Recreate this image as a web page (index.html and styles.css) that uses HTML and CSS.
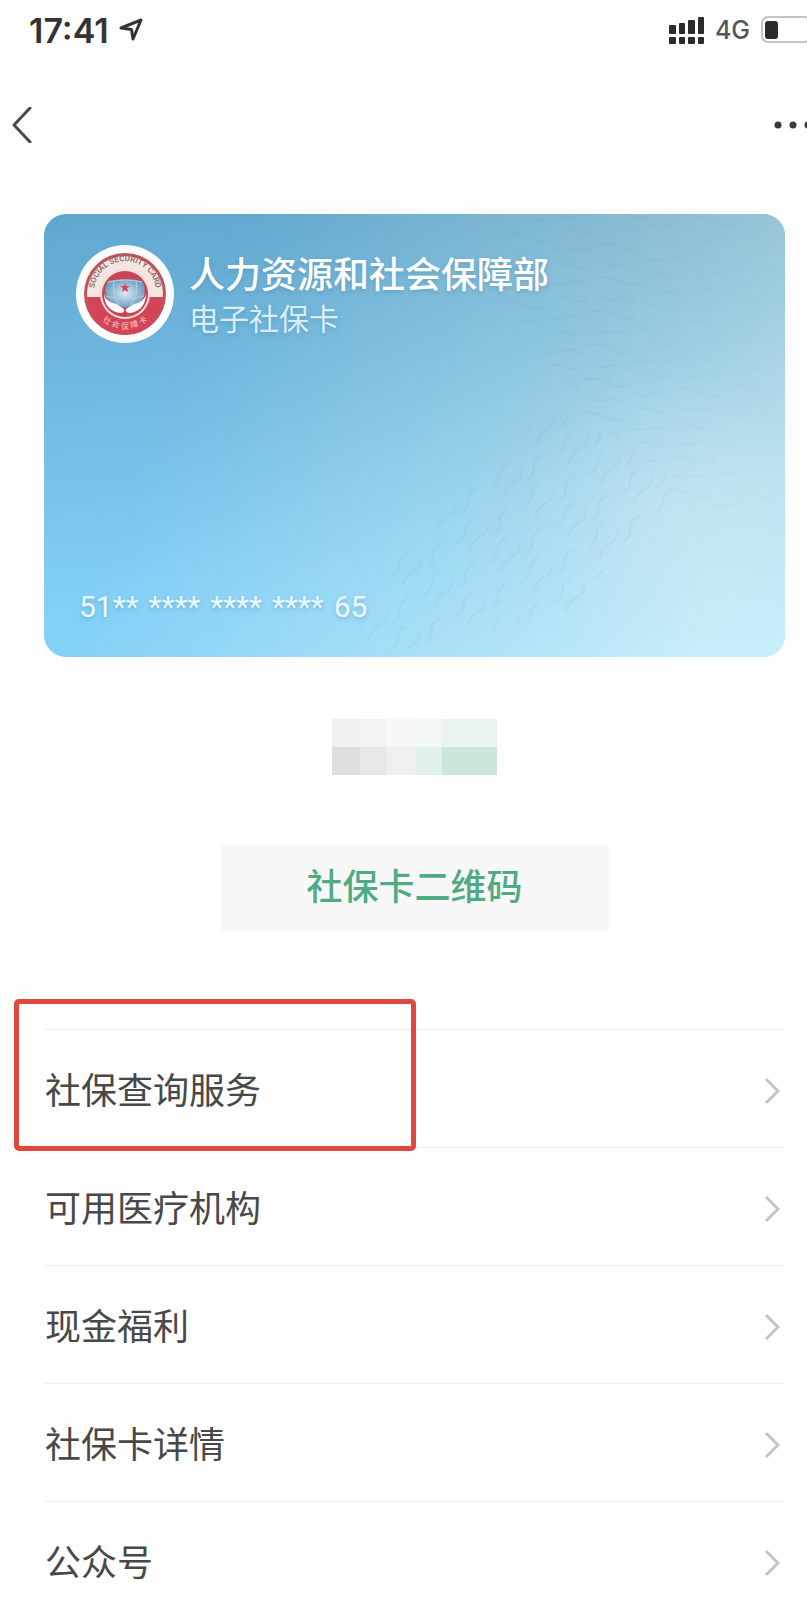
FILE: index.html
```html
<!DOCTYPE html>
<html lang="zh-CN">

<head>
    <meta charset="utf-8">
    <meta name="viewport" content="width=device-width, initial-scale=1">
    <title>电子社保卡</title>
    <link rel="stylesheet" href="styles.css">
</head>

<body>
    <!-- 状态栏 -->
    <div class="status">
        <span class="time">17:41</span>
        <svg class="locate" width="24" height="24" viewBox="0 0 24 24">
            <path d="M2 10L22 2L14 21L12.500 11.500Z" />
        </svg>
        <svg class="signal" width="36" height="28" viewBox="0 0 36 28">
            <rect x="0" y="9" width="7" height="9" rx="1" />
            <rect x="10" y="7" width="6" height="11" rx="1" />
            <rect x="19" y="4" width="7" height="14" rx="1" />
            <rect x="29" y="1" width="6" height="17" rx="1" />
            <rect x="0" y="21" width="7" height="7" rx="1" />
            <rect x="10" y="21" width="6" height="7" rx="1" />
            <rect x="19" y="21" width="7" height="7" rx="1" />
            <rect x="29" y="21" width="6" height="7" rx="1" />
        </svg>
        <span class="net">4G</span>
        <svg class="battery" width="46" height="28" viewBox="0 0 46 28">
            <rect class="shell" x="1" y="1" width="49" height="25" rx="6" />
            <rect x="4" y="5" width="13" height="18" rx="3" />
        </svg>
    </div>

    <!-- 导航 -->
    <div class="nav">
        <button type="button" class="icon_btn" aria-label="返回">
            <svg class="back" width="20" height="36" viewBox="0 0 20 36">
                <path d="M18 1L2 18L18 35" />
            </svg>
        </button>
        <button type="button" class="icon_btn" aria-label="更多">
            <svg width="34" height="10" viewBox="0 0 34 10">
                <circle cx="5" cy="5" r="3.500" />
                <circle cx="20" cy="5" r="3.500" />
                <circle cx="35" cy="5" r="3.500" />
            </svg>
        </button>
    </div>

    <div class="main">
        <div class="card">
            <!-- 水波纹 -->
            <svg class="wave" viewBox="0 0 740 443" preserveAspectRatio="none">
                <defs>
                    <pattern id="ripple" width="92" height="34" patternUnits="userSpaceOnUse" patternTransform="rotate(6)">
                        <path d="M2 6q12 -4 24 1t22 0M50 15q10 4 20 -1t20 1M8 24q10 4 18 0t18 2M60 30q8 -3 14 0t14 -1" />
                    </pattern>
                    <pattern id="ripple2" width="64" height="38" patternUnits="userSpaceOnUse" patternTransform="rotate(-58)">
                        <path d="M2 7q10 -4 18 1t16 0M30 18q8 4 14 -1t16 1M4 30q8 4 16 0t14 1" />
                    </pattern>
                    <linearGradient id="fade" x1="0" y1="0" x2="1" y2="0">
                        <stop offset="0" stop-color="#000" />
                        <stop offset="0.400" stop-color="#fff" />
                        <stop offset="1" stop-color="#222" />
                    </linearGradient>
                    <mask id="mask">
                        <rect x="380" width="360" height="443" fill="url(#fade)" />
                    </mask>
                </defs>
                <path fill="url(#ripple)" mask="url(#mask)" d="M400 0H740V300L640 290L540 200Z" />
                <path fill="url(#ripple2)" d="M510 190L640 270L520 400L330 443L300 400Z" />
            </svg>
            <div class="card_head">
                <svg class="logo" width="98" height="98" viewBox="0 0 98 98">
                    <defs>
                        <path id="arcTop" d="M19 55A31 31 0 1 1 79 55" />
                        <path id="arcBottom" d="M14 56A36 36 0 0 0 84 56" />
                        <radialGradient id="globe">
                            <stop offset="0" stop-color="#dcecf5" />
                            <stop offset="1" stop-color="#719fc4" />
                        </radialGradient>
                    </defs>
                    <circle cx="49" cy="49" r="49" fill="#fdfcfc" />
                    <circle cx="49" cy="49" r="41" fill="#bd5360" />
                    <circle cx="49" cy="49" r="38" fill="#f3e5df" />
                    <path d="M11 52H87A38 38 0 0 1 11 52Z" fill="#d24556" />
                    <circle cx="49" cy="49" r="25" fill="#f3dedb" />
                    <circle cx="49" cy="49" r="23" fill="#ca4454" />
                    <path d="M32 36Q49 32 66 36Q73 50 62 59Q49 66 36 59Q25 50 32 36Z" fill="url(#globe)" />
                    <path d="M32 37Q49 33 66 37M30 51Q49 58 68 51M38 36Q35 49 43 60M60 36Q63 49 55 60" fill="none" stroke="#b6cede" />
                    <path d="M49 38l1 3 4 0-3 2 1 4-3-2-3 2 1-4-3-2 4 0Z" fill="#dc4053" />
                    <path d="M28 49Q30 57 40 59L48 64Q49 68 44 68Q29 66 28 49ZM70 49Q68 57 58 59L50 64Q49 68 54 68Q69 66 70 49Z" fill="#fff" />
                    <text class="logo_en"><textPath href="#arcTop" startOffset="50%">SOCIAL SECURITY CARD</textPath></text>
                    <text class="logo_cn"><textPath href="#arcBottom" startOffset="50%">社 会 保 障 卡</textPath></text>
                </svg>
                <div>
                    <h1>人力资源和社会保障部</h1>
                    <p>电子社保卡</p>
                </div>
            </div>
            <div class="card_no">
                <span>51**</span>
                <span>****</span>
                <span>****</span>
                <span>****</span>
                <span>65</span>
            </div>
        </div>

        <!-- 打码的姓名 -->
        <div class="mosaic">
            <i class="g1"></i><i class="g2"></i><i class="g3"></i><i class="g4"></i><i class="g5"></i><i class="g5"></i>
            <i class="g6"></i><i class="g7"></i><i class="g8"></i><i class="g9"></i><i class="g10"></i><i class="g10"></i>
        </div>

        <button type="button" class="qr_btn">社保卡二维码</button>

        <ul class="list">
            <li class="marked">
                <a href="#">社保查询服务<svg width="16" height="28" viewBox="0 0 16 28"><path d="M2 2L14 14L2 26" /></svg></a>
            </li>
            <li>
                <a href="#">可用医疗机构<svg width="16" height="28" viewBox="0 0 16 28"><path d="M2 2L14 14L2 26" /></svg></a>
            </li>
            <li>
                <a href="#">现金福利<svg width="16" height="28" viewBox="0 0 16 28"><path d="M2 2L14 14L2 26" /></svg></a>
            </li>
            <li>
                <a href="#">社保卡详情<svg width="16" height="28" viewBox="0 0 16 28"><path d="M2 2L14 14L2 26" /></svg></a>
            </li>
            <li>
                <a href="#">公众号<svg width="16" height="28" viewBox="0 0 16 28"><path d="M2 2L14 14L2 26" /></svg></a>
            </li>
        </ul>
    </div>
</body>

</html>
```
FILE: styles.css
```css
*,
*::before,
*::after {
    padding: 0;
    margin: 0;
    box-sizing: border-box;
}

body {
    font-family: Inter, "Noto Sans CJK SC", sans-serif;
    color: #444;
    background: #fefefe;
}

ul {
    list-style: none;
}

svg {
    display: block;
    flex: none;
}

button {
    border: 0;
    background: none;
    font-family: inherit;
    cursor: pointer;
}

/* 状态栏 */
.status {
    display: flex;
    align-items: center;
    height: 60px;
    padding-left: 29px;
    fill: #2b2b2b;
}

.time {
    font-size: 34px;
    font-weight: 600;
    color: #333;
}

.locate {
    margin-left: 10px;
    fill: none;
    stroke: #333;
    stroke-width: 3;
    stroke-linejoin: round;
}

.signal {
    margin-left: auto;
}

.net {
    margin: 0 11px 0 10px;
    font-size: 25px;
    font-weight: 500;
    color: #555;
}

.battery .shell {
    fill: none;
    stroke: #c4c4c4;
    stroke-width: 2;
}

/* 导航 */
.nav {
    display: flex;
    align-items: center;
    justify-content: space-between;
    height: 130px;
    padding-left: 12px;
}

.icon_btn {
    padding: 12px 0;
    fill: #3a3a3a;
}

.back {
    fill: none;
    stroke: #4a4a4a;
    stroke-width: 3;
    stroke-linecap: round;
    stroke-linejoin: round;
}

.main {
    padding: 24px 22px 0 44px;
}

/* 卡片 */
.card {
    position: relative;
    display: flex;
    flex-direction: column;
    justify-content: space-between;
    height: 443px;
    padding: 31px 32px 30px;
    border-radius: 22px;
    overflow: hidden;
    color: #fff;
    background: linear-gradient(176deg, #60a7cf 0%, #76bfe6 48%, #82d0f8 80%, #88d4f5 100%);
}

/* 右侧的亮光 */
.card::before {
    content: "";
    position: absolute;
    top: 0;
    left: 0;
    width: 100%;
    height: 100%;
    background:
        radial-gradient(ellipse 150px 150px at 83% 68%, rgba(218, 236, 242, 0.5), rgba(218, 236, 242, 0)),
        linear-gradient(170deg, #98bcc9 0%, #a2cede 35%, #b9e0ef 65%, #c9effd 100%);
    -webkit-mask-image: linear-gradient(110deg, transparent 20%, #000 90%);
    mask-image: linear-gradient(110deg, transparent 20%, #000 90%);
}

.wave {
    position: absolute;
    top: 0;
    left: 0;
    width: 100%;
    height: 100%;
    fill: none;
}

.wave pattern path {
    stroke: rgba(60, 140, 180, 0.08);
    stroke-width: 2;
}

.card_head {
    position: relative;
    display: flex;
    gap: 15px;
    text-shadow: 0 2px 4px rgba(50, 110, 150, 0.3);
}

.card h1 {
    margin-top: 4px;
    font-size: 36px;
    line-height: 52px;
    font-weight: 500;
}

.card p {
    font-size: 30px;
    line-height: 36px;
    color: #d9edf7;
}

.logo text {
    text-anchor: middle;
    text-shadow: none;
}

.logo_en {
    font-family: Roboto, sans-serif;
    font-size: 8px;
    font-weight: 500;
    fill: #8c6464;
}

.logo_cn {
    font-size: 8px;
    fill: #f3c8c4;
}

.card_no {
    position: relative;
    display: flex;
    gap: 10px;
    padding-left: 3px;
    font-family: Roboto, sans-serif;
    font-size: 30px;
    line-height: 40px;
    color: #e9f8ff;
    text-shadow: 0 2px 4px rgba(50, 110, 150, 0.3);
}

/* 打码 */
.mosaic {
    display: grid;
    grid-template-columns: repeat(6, 1fr);
    grid-template-rows: 28px 28px;
    width: 165px;
    margin: 62px auto 70px;
}

.g1 {
    background: #f0f0f0;
}

.g2 {
    background: #f3f3f3;
}

.g3 {
    background: #f8f8f8;
}

.g4 {
    background: #f3f8f5;
}

.g5 {
    background: #e9f4ee;
}

.g6 {
    background: #dedede;
}

.g7 {
    background: #e8e8e8;
}

.g8 {
    background: #f0f0f0;
}

.g9 {
    background: #e0f2ea;
}

.g10 {
    background: #cce7d9;
}

.qr_btn {
    display: block;
    width: 388px;
    height: 86px;
    margin: 0 auto 98px;
    padding-bottom: 8px;
    background: #f8f8f8;
    font-size: 36px;
    font-weight: 500;
    color: #50ab84;
}

/* 菜单 */
.list li {
    position: relative;
    border-top: 1px solid #eee;
}

.list a {
    display: flex;
    align-items: center;
    justify-content: space-between;
    height: 117px;
    padding: 4px 5px 0 1px;
    font-size: 36px;
    line-height: 48px;
    color: #484848;
    text-decoration: none;
}

.list svg {
    fill: none;
    stroke: #c4c4c4;
    stroke-width: 3;
}

/* 红框标注 */
.marked::after {
    content: "";
    position: absolute;
    z-index: 1;
    top: -31px;
    left: -30px;
    width: 402px;
    height: 152px;
    border: 5px solid #e0483f;
    border-radius: 5px;
    pointer-events: none;
}
```
